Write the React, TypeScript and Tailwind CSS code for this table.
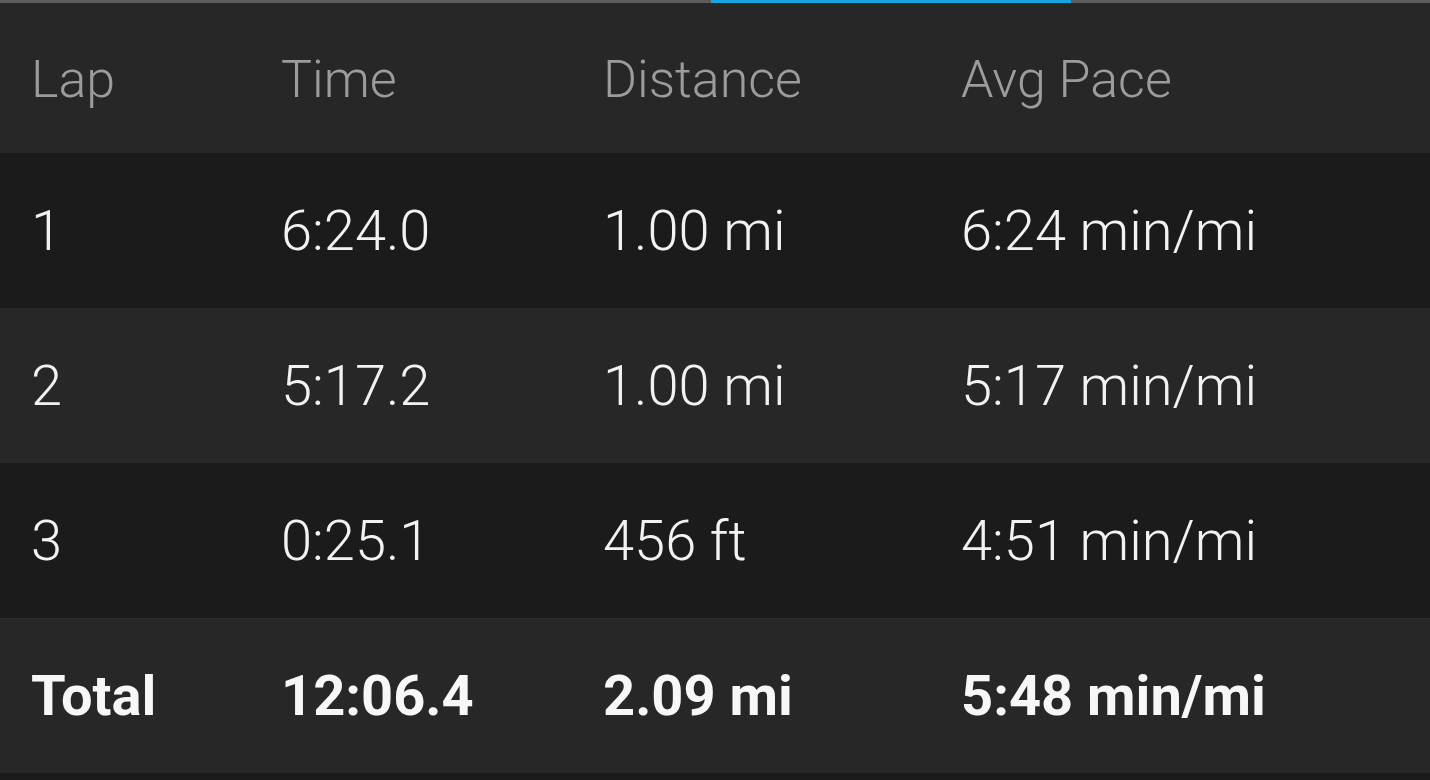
import React from "react";

const rows = [
  ["1", "6:24.0", "1.00 mi", "6:24 min/mi"],
  ["2", "5:17.2", "1.00 mi", "5:17 min/mi"],
  ["3", "0:25.1", "456 ft", "4:51 min/mi"],
];

function Row({ cells, bg, cls }: { cells: string[]; bg: string; cls: string }) {
  return (
    <div className={`flex h-[155px] items-center ${bg} ${cls}`}>
      <div className="w-[281px] pl-[31px]">{cells[0]}</div>
      <div className="w-[322px]">{cells[1]}</div>
      <div className="w-[358px]">{cells[2]}</div>
      <div className="flex-1">{cells[3]}</div>
    </div>
  );
}

export default function App() {
  return (
    <div
      className="w-[1430px] h-[780px] overflow-hidden bg-[#1b1b1b] text-[56px] leading-none"
      style={{ fontFamily: "Roboto, 'Noto Sans', sans-serif" }}
    >
      <div className="flex h-[3px] bg-[#5c5c5c]">
        <div className="w-[711px]" />
        <div className="w-[360px] bg-[#17a5e0]" />
      </div>
      <div className="flex h-[150px] items-center pt-[3px] bg-[#272727] font-light text-[#9c9c9c] text-[52px]">
        <div className="w-[281px] pl-[31px]">Lap</div>
        <div className="w-[322px]">Time</div>
        <div className="w-[358px]">Distance</div>
        <div className="flex-1">Avg Pace</div>
      </div>
      <Row cells={rows[0]} bg="bg-[#1b1b1b]" cls="font-light text-[#f2f2f2]" />
      <Row cells={rows[1]} bg="bg-[#272727]" cls="font-light text-[#f2f2f2]" />
      <Row cells={rows[2]} bg="bg-[#1b1b1b]" cls="font-light text-[#f2f2f2]" />
      <Row cells={["Total", "12:06.4", "2.09 mi", "5:48 min/mi"]} bg="bg-[#272727] border-t border-[#2e2e2e]" cls="font-bold text-[#f7f7f7]" />
    </div>
  );
}
